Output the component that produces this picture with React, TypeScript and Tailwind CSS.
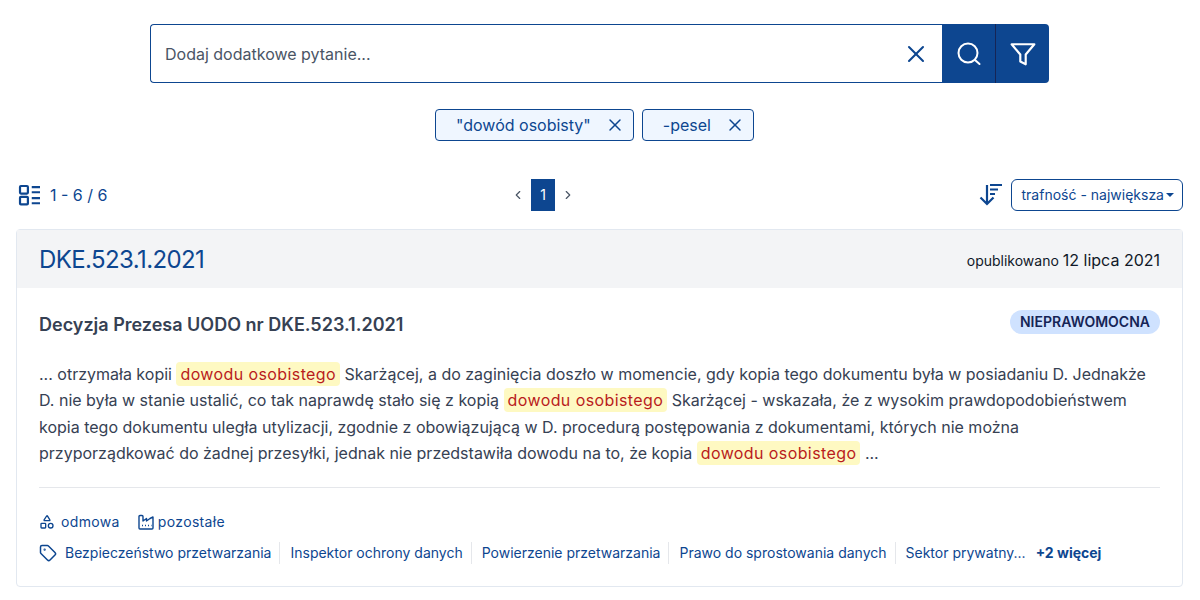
import { X, ChevronLeft, ChevronRight, Shapes, Tag } from 'lucide-react';

const tags = [
  'Bezpieczeństwo przetwarzania',
  'Inspektor ochrony danych',
  'Powierzenie przetwarzania',
  'Prawo do sprostowania danych',
];

function Mark({ children }: { children: string }) {
  return <span className="bg-yellow-100 text-[#b91c1c] rounded-sm px-1 py-0.5 tracking-wide">{children}</span>;
}

function ListIcon() {
  return (
    <svg width="22" height="22" viewBox="0 0 24 24" fill="none" stroke="currentColor" strokeWidth="2.4">
      <rect x="2.2" y="2.2" width="8.6" height="8.2" rx="1" />
      <rect x="2.2" y="14" width="8.6" height="8.2" rx="1" />
      <path d="M15 3.5h9M15 9h9M15 15.5h9M15 21h9" />
    </svg>
  );
}

function SortIcon() {
  return (
    <svg width="24" height="24" viewBox="0 0 24 24" fill="none" stroke="currentColor" strokeWidth="2.2">
      <path d="M8 2v19M1.5 14.5 8 21l6.5-6.5" />
      <path d="M11 2h12M11 6.5h8M11 11h5" />
    </svg>
  );
}

function FunnelIcon() {
  return (
    <svg width="26" height="26" viewBox="0 0 24 24" fill="none" stroke="white" strokeWidth="2" strokeLinejoin="round">
      <path d="M1.5 3h21L14.5 12.5V21.5L9.5 19V12.5Z" />
    </svg>
  );
}

function SearchIcon() {
  return (
    <svg width="24" height="24" viewBox="0 0 24 24" fill="none" stroke="white" strokeWidth="2" strokeLinecap="round">
      <circle cx="11" cy="11" r="9.5" />
      <path d="m18 18 4.5 4" />
    </svg>
  );
}

function FactoryIcon() {
  return (
    <svg width="16" height="16" viewBox="0 0 16 16" fill="none" stroke="currentColor" strokeWidth="1.4" strokeLinejoin="round">
      <path d="M1 14V2.5A1 1 0 0 1 2 1.5h2a1 1 0 0 1 1 1V7l3.5-2.5V7L12 4.5l3-1.5V14a1 1 0 0 1-1 1H2a1 1 0 0 1-1-1Z" />
      <path d="M4 11.5h1M7 11.5h1M10 11.5h1M13 11.5h.5" />
    </svg>
  );
}

export default function App() {
  return (
    <div className="w-[1199px] h-[600px] overflow-hidden bg-white px-4 pt-6 font-['Inter',sans-serif] text-[#0d4690]">
      <div className="flex justify-center">
        <div className="w-[899px] h-[59px] flex">
          <div className="flex-1 flex items-center border border-[#0d4690] border-r-0 rounded-l pl-3.5 pr-3">
            <span className="flex-1 text-base text-gray-600">Dodaj dodatkowe pytanie...</span>
            <X size={28} strokeWidth={1.75} />
          </div>
          <button className="w-[54px] bg-[#0d4690] flex items-center justify-center border-r border-blue-950">
            <SearchIcon />
          </button>
          <button className="w-[53px] bg-[#0d4690] rounded-r flex items-center justify-center">
            <FunnelIcon />
          </button>
        </div>
      </div>

      <div className="flex justify-center gap-2 mt-6.5 pr-2.5">
        <div className="h-8 flex items-center gap-3.5 pl-5 pr-2 bg-blue-50 border border-[#0d4690] rounded text-base">
          <span>"dowód osobisty"</span>
          <X size={20} strokeWidth={1.75} />
        </div>
        <div className="h-8 flex items-center gap-3.5 pl-5 pr-2 bg-blue-50 border border-[#0d4690] rounded text-base">
          <span>-pesel</span>
          <X size={20} strokeWidth={1.75} />
        </div>
      </div>

      <div className="flex items-center justify-between h-8 mt-9.5 pl-0.5">
        <div className="flex items-center gap-2.5 text-base">
          <ListIcon />
          <span>1 - 6 / 6</span>
        </div>
        <div className="flex items-center gap-1.5 text-sm">
          <ChevronLeft size={14} className="text-gray-600" />
          <span className="w-6 h-8 bg-[#0d4690] text-white flex items-center justify-center">1</span>
          <ChevronRight size={14} className="text-gray-600" />
        </div>
        <div className="flex items-center justify-end gap-2">
          <SortIcon />
          <div className="h-8 flex items-center gap-0.5 pl-2.5 pr-2 border border-[#0d4690] rounded-md text-sm">
            <span>trafność - największa</span>
            <span className="w-0 h-0 border-x-4 border-x-transparent border-t-4 border-t-[#0d4690]" />
          </div>
        </div>
      </div>

      <div className="mt-4.5 border border-slate-200 rounded h-[358px]">
        <div className="h-[58px] bg-gray-100 flex items-center justify-between px-5.5 pt-0.5">
          <span className="text-2xl tracking-tight">DKE.523.1.2021</span>
          <span className="text-sm text-gray-900">
            opublikowano <span className="text-base">12 lipca 2021</span>
          </span>
        </div>
        <div className="px-5.5 pt-5.5">
          <div className="flex items-start justify-between">
            <h2 className="mt-px text-lg font-semibold text-gray-700">Decyzja Prezesa UODO nr DKE.523.1.2021</h2>
            <span className="bg-[#cfe2ff] text-blue-950 text-sm font-semibold rounded-full px-2.5 py-0.5">NIEPRAWOMOCNA</span>
          </div>
          <p className="mt-5.5 text-base leading-[1.65] text-gray-700">
            ... otrzymała kopii <Mark>dowodu osobistego</Mark> Skarżącej, a do zaginięcia doszło w momencie, gdy kopia tego dokumentu była w posiadaniu D. Jednakże
            <br />
            D. nie była w stanie ustalić, co tak naprawdę stało się z kopią <Mark>dowodu osobistego</Mark> Skarżącej - wskazała, że z wysokim prawdopodobieństwem
            <br />
            kopia tego dokumentu uległa utylizacji, zgodnie z obowiązującą w D. procedurą postępowania z dokumentami, których nie można
            <br />
            przyporządkować do żadnej przesyłki, jednak nie przedstawiła dowodu na to, że kopia <Mark>dowodu osobistego</Mark> ...
          </p>
          <div className="border-t border-gray-200 mt-5 pt-6 text-sm">
            <div className="flex items-center gap-4.5 tracking-wide">
              <span className="flex items-center gap-1.5"><Shapes size={16} />odmowa</span>
              <span className="flex items-center gap-1"><FactoryIcon />pozostałe</span>
            </div>
            <div className="flex items-center mt-2.5">
              <Tag size={18} className="mr-2" />
              {tags.map((t) => (
                <span key={t} className="pr-2 mr-2.5 border-r border-gray-200 leading-relaxed">{t}</span>
              ))}
              <span>Sektor prywatny...</span>
              <span className="ml-2.5 font-bold">+2 więcej</span>
            </div>
          </div>
        </div>
      </div>
    </div>
  );
}
